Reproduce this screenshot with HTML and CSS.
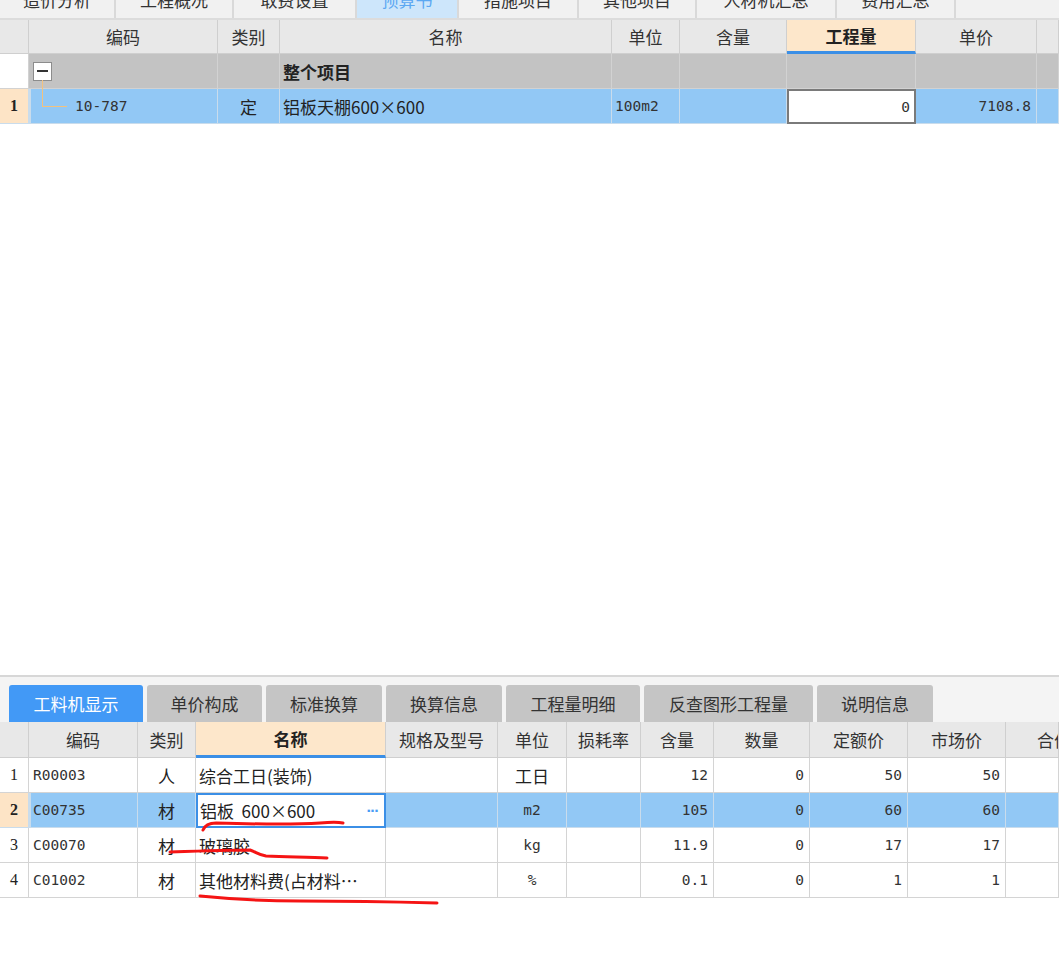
FILE: index.html
```html
<!DOCTYPE html>
<html lang="zh-CN">
<head>
<meta charset="utf-8">
<title>预算书</title>
<link rel="stylesheet" href="styles.css">
</head>
<body>
<div class="app">
  <section class="top-pane">
    <nav class="top-tabs">
      <div class="ttab w1"><span>造价分析</span></div>
      <div class="ttab w2"><span>工程概况</span></div>
      <div class="ttab w3"><span>取费设置</span></div>
      <div class="ttab w4 active"><span>预算书</span></div>
      <div class="ttab w5"><span>措施项目</span></div>
      <div class="ttab w6"><span>其他项目</span></div>
      <div class="ttab w7"><span>人材机汇总</span></div>
      <div class="ttab w8"><span>费用汇总</span></div>
      <div class="ttab rest"></div>
    </nav>
    <div class="top-grid">
      <div class="row head">
        <div class="c rn"></div>
        <div class="c ctr">编码</div>
        <div class="c ctr">类别</div>
        <div class="c ctr">名称</div>
        <div class="c ctr">单位</div>
        <div class="c ctr">含量</div>
        <div class="c ctr hl">工程量</div>
        <div class="c ctr">单价</div>
        <div class="c"></div>
      </div>
      <div class="row group">
        <div class="c rn"></div>
        <div class="c code-g"><span class="toggle"><i></i></span></div>
        <div class="c"></div>
        <div class="c name bold">整个项目</div>
        <div class="c"></div>
        <div class="c"></div>
        <div class="c"></div>
        <div class="c"></div>
        <div class="c"></div>
      </div>
      <div class="row sel">
        <div class="c rn cur"><span class="rnum bold">1</span></div>
        <div class="c code-t num"><span class="tree"></span>10-787</div>
        <div class="c ctr">定</div>
        <div class="c name">铝板天棚600×600</div>
        <div class="c num unit">100m2</div>
        <div class="c"></div>
        <div class="c num right edit">0</div>
        <div class="c num right">7108.8</div>
        <div class="c"></div>
      </div>
    </div>
  </section>

  <section class="bottom-pane">
    <nav class="btabs">
      <div class="btab b1 active">工料机显示</div>
      <div class="btab b2">单价构成</div>
      <div class="btab b3">标准换算</div>
      <div class="btab b4">换算信息</div>
      <div class="btab b5">工程量明细</div>
      <div class="btab b6">反查图形工程量</div>
      <div class="btab b7">说明信息</div>
    </nav>
    <div class="bot-grid">
      <div class="row head">
        <div class="c rn"></div>
        <div class="c ctr">编码</div>
        <div class="c ctr">类别</div>
        <div class="c ctr hl">名称</div>
        <div class="c ctr">规格及型号</div>
        <div class="c ctr">单位</div>
        <div class="c ctr">损耗率</div>
        <div class="c ctr">含量</div>
        <div class="c ctr">数量</div>
        <div class="c ctr">定额价</div>
        <div class="c ctr">市场价</div>
        <div class="c clip">合价</div>
      </div>
      <div class="row">
        <div class="c rn"><span class="rnum">1</span></div>
        <div class="c num code">R00003</div>
        <div class="c ctr">人</div>
        <div class="c name">综合工日(装饰)</div>
        <div class="c"></div>
        <div class="c ctr">工日</div>
        <div class="c"></div>
        <div class="c num right">12</div>
        <div class="c num right">0</div>
        <div class="c num right">50</div>
        <div class="c num right">50</div>
        <div class="c"></div>
      </div>
      <div class="row sel">
        <div class="c rn cur"><span class="rnum bold">2</span></div>
        <div class="c num code curl">C00735</div>
        <div class="c ctr">材</div>
        <div class="c name editb"><span>铝板&nbsp;&nbsp;600×600</span><span class="dots">···</span></div>
        <div class="c"></div>
        <div class="c num ctr">m2</div>
        <div class="c"></div>
        <div class="c num right">105</div>
        <div class="c num right">0</div>
        <div class="c num right">60</div>
        <div class="c num right">60</div>
        <div class="c"></div>
      </div>
      <div class="row">
        <div class="c rn"><span class="rnum">3</span></div>
        <div class="c num code">C00070</div>
        <div class="c ctr">材</div>
        <div class="c name">玻璃胶</div>
        <div class="c"></div>
        <div class="c num ctr">kg</div>
        <div class="c"></div>
        <div class="c num right">11.9</div>
        <div class="c num right">0</div>
        <div class="c num right">17</div>
        <div class="c num right">17</div>
        <div class="c"></div>
      </div>
      <div class="row">
        <div class="c rn"><span class="rnum">4</span></div>
        <div class="c num code">C01002</div>
        <div class="c ctr">材</div>
        <div class="c name">其他材料费(占材料…</div>
        <div class="c"></div>
        <div class="c num ctr">%</div>
        <div class="c"></div>
        <div class="c num right">0.1</div>
        <div class="c num right">0</div>
        <div class="c num right">1</div>
        <div class="c num right">1</div>
        <div class="c"></div>
      </div>
    </div>
  </section>

  <svg class="marks" width="1059" height="959" viewBox="0 0 1059 959" aria-hidden="true">
    <path d="M203,830 C205,825 209,823 216,823 C250,824 290,825 320,823 C332,822 338,822 343,823"/>
    <path d="M170,852 C200,851 230,850 250,850 C256,852 259,855 266,856 C290,857 310,857 327,858"/>
    <path d="M200,896 C230,899 262,901 300,901 C350,901 400,902 437,903"/>
  </svg>
</div>
</body>
</html>
```

FILE: styles.css
```css
* { box-sizing: border-box; margin: 0; padding: 0; }
html, body { height: 100%; }
body {
  font-family: "Noto Sans CJK SC", "Noto Sans", sans-serif;
  font-size: 17px;
  color: #222;
  background: #fff;
  overflow: hidden;
}
.app {
  position: relative;
  height: 100vh;
  display: flex;
  flex-direction: column;
}
.top-pane { flex: 1; }

/* top tab strip (scrolled, labels clipped) */
.top-tabs {
  display: flex;
  height: 20px;
  background: #f1f1f1;
  border-bottom: 2px solid #dcdcdc;
  overflow: hidden;
}
.ttab {
  height: 18px;
  border-right: 2px solid #d9d9d9;
  display: flex;
  justify-content: center;
  overflow: hidden;
}
.ttab span { line-height: 18px; margin-top: -9px; color: #333; }
.ttab.active { background: #cde6fb; }
.ttab.active span { color: #5ca8f2; }
.ttab.rest { flex: 1; border-right: none; }
.w1 { width: 116px; }
.w2 { width: 118px; }
.w3 { width: 123px; }
.w4 { width: 102px; }
.w5 { width: 120px; }
.w6 { width: 118px; }
.w7 { width: 140px; }
.w8 { width: 119px; }

/* grids */
.row { display: grid; height: 35px; }
.top-grid .row { grid-template-columns: 29px 189px 62px 332px 68px 107px 129px 121px 1fr; }
.bot-grid .row { grid-template-columns: 29px 109px 58px 190px 112px 69px 74px 73px 96px 98px 98px 1fr; }
.top-grid .row.head { height: 34px; }
.bot-grid .row.head { height: 36px; }

.c {
  display: flex;
  align-items: center;
  border-right: 1px solid #d4d4d4;
  border-bottom: 1px solid #d4d4d4;
  white-space: nowrap;
  overflow: hidden;
  position: relative;
}
.head .c { background: #e8e8e8; color: #333; border-color: #cfcfcf; }
.head .c.hl {
  background: #fde7cb;
  font-weight: bold;
  color: #222;
  border-bottom: 3px solid #3b8fe6;
}
.ctr { justify-content: center; }
.right { justify-content: flex-end; padding-right: 5px; }
.name { padding-left: 3px; }
.code { padding-left: 4px; }
.unit { padding-left: 3px; }
.bold { font-weight: bold; }
.clip { padding-left: 31px; }

.num {
  font-family: "DejaVu Sans Mono", monospace;
  font-size: 14.5px;
  color: #333;
}
.rnum {
  font-family: "Liberation Serif", serif;
  font-size: 16px;
}
.rn { justify-content: center; background: #fff; }
.head .rn { background: #e8e8e8; }
.rn.cur { background: #fde4c6; }

/* group row */
.group .c { background: #c3c3c3; border-color: #d2d2d2; }
.group .c.rn { background: #fff; }
.code-g { padding-left: 4px; }
.toggle {
  width: 19px;
  height: 19px;
  background: #fff;
  border: 1px solid #8c8c8c;
  display: flex;
  align-items: center;
  justify-content: center;
}
.toggle i { display: block; width: 11px; height: 2px; background: #333; }

/* selected rows */
.sel .c { background: #92c8f5; border-color: #c9dcec; }
.sel .c.rn { background: #fde4c6; }
.code-t {
  border-left: 2px solid #3b8fe6;
  padding-left: 44px;
  overflow: visible;
}
.tree {
  position: absolute;
  left: 11px;
  top: -9px;
  width: 25px;
  height: 27px;
  border-left: 1px solid #f3c27e;
  border-bottom: 1px solid #f3c27e;
}
.sel .c.edit {
  background: #fff;
  border: 2px solid #7a7a7a;
  padding-right: 4px;
}
.curl { border-left: 2px solid #3b8fe6; padding-left: 2px; }
.sel .c.editb {
  background: #fff;
  border: 2px solid #3b8fe6;
  justify-content: space-between;
  padding-left: 2px;
  padding-right: 6px;
}
.dots {
  color: #4a9cf5;
  font-family: "DejaVu Sans", sans-serif;
  font-size: 13px;
  font-weight: bold;
  letter-spacing: -1px;
}

/* bottom pane */
.bottom-pane {
  height: 284px;
  border-top: 2px solid #d7d7d7;
  background: #fff;
}
.btabs {
  height: 45px;
  background: #f4f4f4;
  padding: 8px 0 0 9px;
  display: flex;
  align-items: flex-end;
  gap: 4px;
}
.btab {
  height: 37px;
  background: #c5c5c5;
  border-radius: 3px 3px 0 0;
  color: #333;
  display: flex;
  align-items: center;
  justify-content: center;
}
.btab.active { background: #4299f6; color: #fff; }
.b1 { width: 134px; }
.b2 { width: 115px; }
.b3 { width: 116px; }
.b4 { width: 116px; }
.b5 { width: 134px; }
.b6 { width: 169px; }
.b7 { width: 116px; }

/* annotation overlay */
.marks {
  position: absolute;
  left: 0;
  top: 0;
  pointer-events: none;
}
.marks path {
  fill: none;
  stroke: #f51414;
  stroke-width: 3;
  stroke-linecap: round;
  stroke-linejoin: round;
}
```
